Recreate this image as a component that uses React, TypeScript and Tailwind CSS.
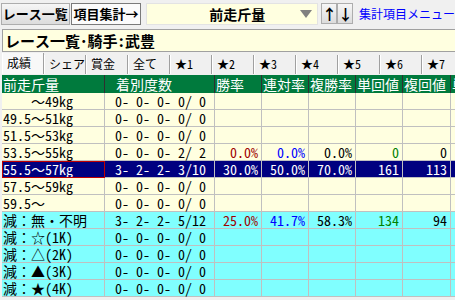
import React from 'react';

type Row = {
  label: string;
  count: string;
  stats: string[];
  cyan?: boolean;
  selected?: boolean;
};

const rows: Row[] = [
  { label: '    ～49kg', count: '0- 0- 0- 0/ 0', stats: [] },
  { label: '49.5～51kg', count: '0- 0- 0- 0/ 0', stats: [] },
  { label: '51.5～53kg', count: '0- 0- 0- 0/ 0', stats: [] },
  { label: '53.5～55kg', count: '0- 0- 0- 2/ 2', stats: ['0.0%', '0.0%', '0.0%', '0', '0'] },
  { label: '55.5～57kg', count: '3- 2- 2- 3/10', stats: ['30.0%', '50.0%', '70.0%', '161', '113'], selected: true },
  { label: '57.5～59kg', count: '0- 0- 0- 0/ 0', stats: [] },
  { label: '59.5～', count: '0- 0- 0- 0/ 0', stats: [] },
  { label: '減：無・不明', count: '3- 2- 2- 5/12', stats: ['25.0%', '41.7%', '58.3%', '134', '94'], cyan: true },
  { label: '減：☆(1K)', count: '0- 0- 0- 0/ 0', stats: [], cyan: true },
  { label: '減：△(2K)', count: '0- 0- 0- 0/ 0', stats: [], cyan: true },
  { label: '減：▲(3K)', count: '0- 0- 0- 0/ 0', stats: [], cyan: true },
  { label: '減：★(4K)', count: '0- 0- 0- 0/ 0', stats: [], cyan: true },
];

const headers = ['前走斤量', '着別度数', '勝率', '連対率', '複勝率', '単回値', '複回値', '単'];
const statColors = ['text-[#a00000]', 'text-[#0000ff]', 'text-black', 'text-[#008000]', 'text-black'];
const tabs = ['成績', 'シェア', '賞金', '全て', '★1', '★2', '★3', '★4', '★5', '★6', '★7'];

const font = "font-['Noto_Sans_Mono_CJK_JP','Noto_Sans_CJK_JP',monospace]";

const App: React.FC = () => {
  return (
    <div className={`w-[455px] h-[300px] overflow-hidden bg-[#f0f0f0] text-black ${font}`}>
      {/* toolbar */}
      <div className="flex items-start h-[29px] pt-[3px] pl-[1px]">
        <button className="h-[22px] w-[75px] border border-[#adadad] bg-gradient-to-b from-[#f6f6f6] to-[#dcdcdc] text-[13px] font-bold leading-[20px]">
          レース一覧
        </button>
        <button className="h-[22px] w-[77px] ml-[1px] border border-[#7a7a7a] bg-[#fbfbfb] text-[13px] font-bold leading-[20px]">
          項目集計→
        </button>
        <div className="ml-[5px] h-[22px] w-[188px] flex items-center bg-[#ffffe0] border border-[#e3e3e3]">
          <span className="flex-1 pl-[62px] text-[14px] font-bold leading-[20px]">前走斤量</span>
          <span className="mr-[5px] w-0 h-0 border-l-[6px] border-r-[6px] border-t-[8px] border-l-transparent border-r-transparent border-t-[#808080]" />
        </div>
        <button className="ml-[3px] h-[21px] w-[16px] border border-[#adadad] bg-gradient-to-b from-[#f6f6f6] to-[#dcdcdc] text-[15px] font-bold leading-[18px]">↑</button>
        <button className="h-[21px] w-[16px] border border-[#adadad] bg-gradient-to-b from-[#f6f6f6] to-[#dcdcdc] text-[15px] font-bold leading-[18px]">↓</button>
        <span className="ml-[6px] text-[12px] leading-[22px] text-[#0000ff] whitespace-nowrap">集計項目メニュー</span>
      </div>

      {/* title box */}
      <div className="ml-[2px] h-[23px] border border-[#a0a0a0] border-r-0 bg-[#ffffe0] pl-[2px] text-[15px] font-bold leading-[21px]">
        レース一覧･騎手:武豊
      </div>

      {/* tabs */}
      <div className="flex h-[23px] pt-[3px] pl-[2px]">
        {tabs.map((t, i) => (
          <div
            key={t}
            className={`shrink-0 w-[42px] text-[12px] pl-[5px] border-r border-[#a0a0a0] shadow-[inset_1px_0_0_#ffffff] ${
              i === 0 ? 'bg-[#f8f8f8] -mt-[2px] h-[21px] leading-[20px]' : 'bg-[#f0f0f0] h-[19px] leading-[18px]'
            }`}
          >
            {t}
          </div>
        ))}
      </div>

      {/* grid */}
      <div className="ml-[2px] grid grid-cols-[103px_110px_47px_47px_47px_47px_48px_47px] text-[14px]">
        {headers.map((h, i) => (
          <div
            key={h}
            className={`h-[18px] leading-[18px] bg-[#007a3d] text-white border-r border-[#303030] whitespace-pre ${
              i === 1 ? 'pl-[11px]' : 'pl-[1px]'
            }`}
          >
            {h}
          </div>
        ))}
        {rows.map((r, ri) => {
          const bg = r.selected ? 'bg-[#000080] text-white' : r.cyan ? 'bg-[#80ffff]' : 'bg-[#ffffe0]';
          const cell = `h-[17px] leading-[16px] border-r border-b border-[#c0c0c0] whitespace-pre ${bg}`;
          return (
            <React.Fragment key={ri}>
              <div className={`${cell} pl-[1px] ${r.selected ? 'outline outline-1 -outline-offset-1 outline-[#c00000]' : ''}`}>
                {r.label}
              </div>
              <div className={`${cell} pl-[10px]`}>{r.count}</div>
              {[0, 1, 2, 3, 4].map((k) => (
                <div key={k} className={`${cell} text-right pr-[3px] ${r.selected ? '' : statColors[k]}`}>
                  {r.stats[k] ?? ''}
                </div>
              ))}
              <div className={cell} />
            </React.Fragment>
          );
        })}
      </div>
    </div>
  );
};

export default App;
